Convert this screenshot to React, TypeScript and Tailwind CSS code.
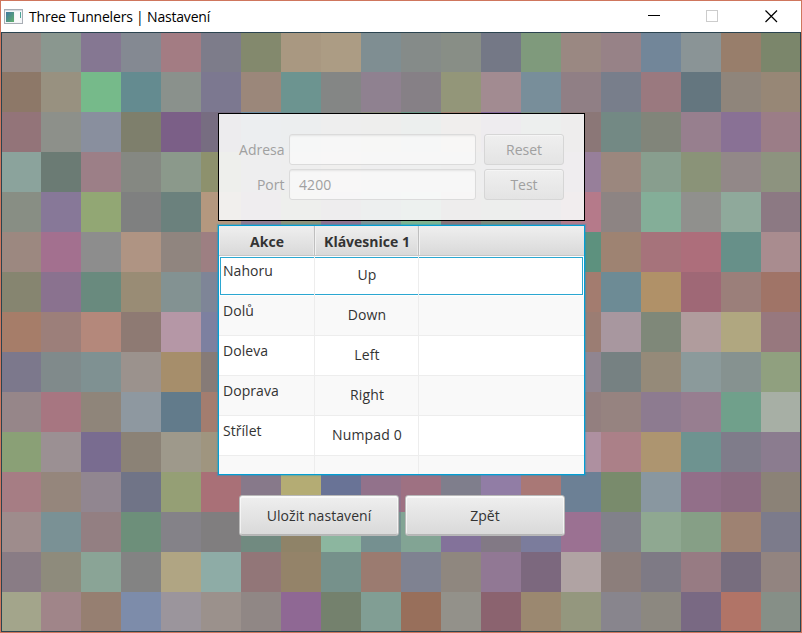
const TILE_ROWS: string[] = [
  '968a86 8a978f 857792 848992 a37c83 7d7c8a 83896d a99881 ac9c84 7f8e92 858b89 888e86 747886 7f9a7c 9a8882 978287 728699 8a9496 987e6b 7b866b',
  '8d7868 989180 76ba8a 648b90 8a918c 7c7890 9b877a 6c9490 848685 8f8190 868086 939679 a28b91 788e9a 907f85 787e8b 9a797f 64767f 8f857b 978776',
  '937479 8d908a 898f9e 7e7f6c 7b5f87 776d81 6d8ba0 6c8e90 848684 8a8c7c 6a9585 a08070 866a9a 7c9084 8b7777 738984 81857a 977f8e 897195 9b7d87',
  '8ba39c 6b7b74 9c7f87 858882 8b998b 8d916d 8a8a98 878b88 a89a80 8e8e92 8a9490 8f8e86 8a8690 888a84 977f9a 9b877e 889e8e 8a9378 928888 8d937f',
  '888e84 877898 92a774 7f8080 6b817d b4987f 917a90 8f937a 8f718f 7f9395 7fb490 8a7478 7f8a7a 8a7b8d b57a8a 8d8483 84ae98 90908d 8fa99b 8c7983',
  '9c8880 a3708f 8d8d8d af9483 90857f 9d7f82 888888 888888 888888 888888 888888 888888 888888 888888 5d917e 9e8372 a6737b ad6e7b 679089 a98c8f',
  '868570 8a728f 698a7e 998c75 839292 7e8597 888888 888888 888888 888888 888888 888888 888888 888888 a37c6f 6d8b95 b09168 9f6876 9b7f7a a07467',
  'a67d69 9c7f7a b4887b 8e7a73 b597a6 7d80a0 888888 888888 888888 888888 888888 888888 888888 888888 9b7d73 a8979f 7f8879 b09c9d b0a780 97787e',
  '7c788c 808a8b 7f9192 9b928d a68e6b 867b77 888888 888888 888888 888888 888888 888888 888888 888888 908590 768182 958a79 8b9a9b 869290 90a07f',
  '968689 a77681 8f857a 8e98a0 627b8b a37d6f 888888 888888 888888 888888 888888 888888 888888 888888 937f7f 968380 8d7b90 977e90 70a08b a7afa5',
  '8aa076 9b9093 796c90 8b8276 9e998b 9f957f 888888 888888 888888 888888 888888 888888 888888 888888 ae90a0 ab8088 ad9570 6e9390 7f7c8a 8b7c8f',
  'a67d84 95867c 918690 707487 959f75 a97077 87798a b4ac74 697396 92728b 9e7182 7f7e8c 917da5 a97876 6c8095 798b6c 8997a0 926f89 8c6c82 8b8277',
  '9e8c8c 7a9195 937f82 6d8f7a 848288 807e7f 718a80 8f8368 8cb69f 759090 82a494 83729a 827985 7b7c9c 9b7192 81818a 8fa891 869f86 9e8272 7c7b8b',
  '897c85 8e8b7c 8aa496 838383 b0a583 8eaca6 927678 948369 76918b 9b7b70 7f8291 8f877f 917894 7c687e b0a3a3 8c7e7b 7e7a85 977b83 776d7e 928480',
  'a3a58b a08589 967f71 7d8caa 9b959c 9b918c 908785 8f6894 74816d 819e94 986f5b 93918a 8b636f 9b8870 94977e 88858d 8c8880 796983 b17467 868f87',
];

const BINDINGS = [
  { action: 'Nahoru', key: 'Up' },
  { action: 'Dolů', key: 'Down' },
  { action: 'Doleva', key: 'Left' },
  { action: 'Doprava', key: 'Right' },
  { action: 'Střílet', key: 'Numpad 0' },
];

function TitleBar() {
  return (
    <header className="flex h-[31px] items-center bg-white">
      <svg className="ml-[3px] h-4 w-5 shrink-0" viewBox="0 0 20 16" shapeRendering="crispEdges">
        <defs>
          <linearGradient id="pane" x1="0" y1="0" x2="1" y2="1">
            <stop offset="0" stopColor="#3f78a0" />
            <stop offset="1" stopColor="#62b06c" />
          </linearGradient>
        </defs>
        <rect x="0.5" y="0.5" width="18" height="14" fill="#f4f6f8" stroke="#a8adb4" />
        <rect x="1" y="1" width="17" height="1" fill="#d5dae0" />
        <rect x="2" y="3" width="8" height="10" fill="url(#pane)" />
        <rect x="11" y="3" width="5" height="10" fill="#fafafa" />
        <rect x="16" y="3" width="1" height="6" fill="#4ba596" />
      </svg>
      <h1 className="ml-[5px] text-[14px] leading-[20px] tracking-[-0.19px] whitespace-pre text-black">Three Tunnelers | Nastavení</h1>
      <div className="mr-[23px] ml-auto flex items-center">
        <svg width="13" height="13" viewBox="0 0 13 13" shapeRendering="crispEdges">
          <path d="M0 5.5H12" stroke="#000" />
        </svg>
        <svg className="ml-[45px]" width="13" height="13" viewBox="0 0 13 13" shapeRendering="crispEdges">
          <rect x="0.5" y="0.5" width="11" height="11" fill="none" stroke="#ccc" />
        </svg>
        <svg className="ml-[46px]" width="13" height="13" viewBox="0 0 13 13">
          <path d="M.5 .5L12 12M12 .5L.5 12" stroke="#000" strokeWidth="1.2" />
        </svg>
      </div>
    </header>
  );
}

function TileField() {
  return (
    <div className="grid grid-cols-[repeat(20,40px)] grid-rows-[repeat(15,40px)] [grid-area:1/1]">
      {TILE_ROWS.flatMap((row, r) =>
        row.split(' ').map((hex, c) => <div key={`${r}-${c}`} style={{ backgroundColor: `#${hex}` }} />),
      )}
    </div>
  );
}

function ServerForm() {
  const field =
    'flex h-[31px] w-[187px] items-center rounded-[3px] border border-[#dbdbdb] bg-white/50 px-[9px] shadow-[inset_0_2px_2px_-1px_rgba(0,0,0,0.08)]';
  const button =
    'h-[31px] w-20 rounded-[3px] border border-[#d6d6d6] bg-linear-to-b from-[#efefef] to-[#e4e4e4] text-center text-[#a0a0a0] shadow-[inset_0_1px_0_rgba(255,255,255,0.4)]';
  return (
    <section className="grid h-[108px] w-[367px] grid-cols-[65px_187px_80px] content-start items-center gap-y-1 border border-black bg-[rgba(244,244,244,0.94)] pt-5 text-[14px] text-[#a0a0a0]">
      <label className="-mr-[0.5px] text-right">Adresa</label>
      <div className={`${field} ml-[5px]`} />
      <button className={`${button} ml-[13px]`}>Reset</button>
      <label className="-mr-[0.5px] text-right">Port</label>
      <div className={`${field} ml-[5px] tracking-[0.1px]`}>4200</div>
      <button className={`${button} ml-[13px]`}>Test</button>
    </section>
  );
}

function BindingsTable() {
  const head =
    'border-r border-[#bfbfbf] shadow-[inset_-1px_0_0_#e9e9e9,inset_1px_0_0_#f2f2f2] flex items-center justify-center pt-[2px] pl-px';
  return (
    <section className="mt-1 flex h-[250px] w-[367px] flex-col overflow-hidden border border-[#039ed3] bg-white text-[14px] text-[#333] shadow-[0_0_1px_1px_rgba(3,158,211,0.35)]">
      <div className="grid h-[30px] shrink-0 grid-cols-[96px_104px_1fr] border-b border-[#c6c6c6] bg-linear-to-b from-[#efefef] to-[#d9d9d9] font-bold">
        <div className={head}>Akce</div>
        <div className={head}>Klávesnice 1</div>
        <div className="shadow-[inset_1px_0_0_#f2f2f2]" />
      </div>
      {BINDINGS.map((b, i) => (
        <div
          key={b.action}
          className={`relative grid h-10 shrink-0 grid-cols-[96px_104px_1fr] ${i === 0 ? '' : 'border-b border-[#ededed]'} ${i % 2 ? 'bg-[#f9f9f9]' : 'bg-white'}`}
        >
          {i === 0 && <div className="absolute top-px right-px left-px h-[38px] border border-[#2ba7d1]" />}
          <div className="relative border-r border-[#ededed] pt-[5px] pl-1 leading-[20px] tracking-[0.05px]">{b.action}</div>
          <div className="relative border-r border-[#ededed] pt-[9px] pl-px text-center leading-[20px] tracking-[0.15px]">{b.key}</div>
          <div />
        </div>
      ))}
      <div className="grid flex-1 grid-cols-[96px_104px_1fr] bg-[#f9f9f9]">
        <div className="border-r border-[#ededed]" />
        <div className="border-r border-[#ededed]" />
      </div>
    </section>
  );
}

function ActionButton({ label }: { label: string }) {
  return (
    <button className="h-[41px] w-40 rounded-[3px] border border-[#b8b8b8] bg-linear-to-b from-[#efefef] to-[#d9d9d9] text-[14px] tracking-[0.06px] text-[#333] shadow-[inset_0_1px_0_1px_rgba(255,255,255,0.6),inset_0_-1px_0_#b5b5b5]">
      {label}
    </button>
  );
}

export default function App() {
  return (
    <div className="h-[633px] w-[802px] overflow-hidden border border-[#cf765d] font-['Open_Sans','Noto_Sans',sans-serif]">
      <TitleBar />
      <main className="grid h-[600px] w-[800px]">
        <TileField />
        <div className="z-10 flex flex-col items-start border border-[#2b4450] pt-20 pl-[216px] [grid-area:1/1]">
          <ServerForm />
          <BindingsTable />
          <div className="mt-5 ml-[21px] flex gap-[6px]">
            <ActionButton label="Uložit nastavení" />
            <ActionButton label="Zpět" />
          </div>
        </div>
      </main>
    </div>
  );
}
